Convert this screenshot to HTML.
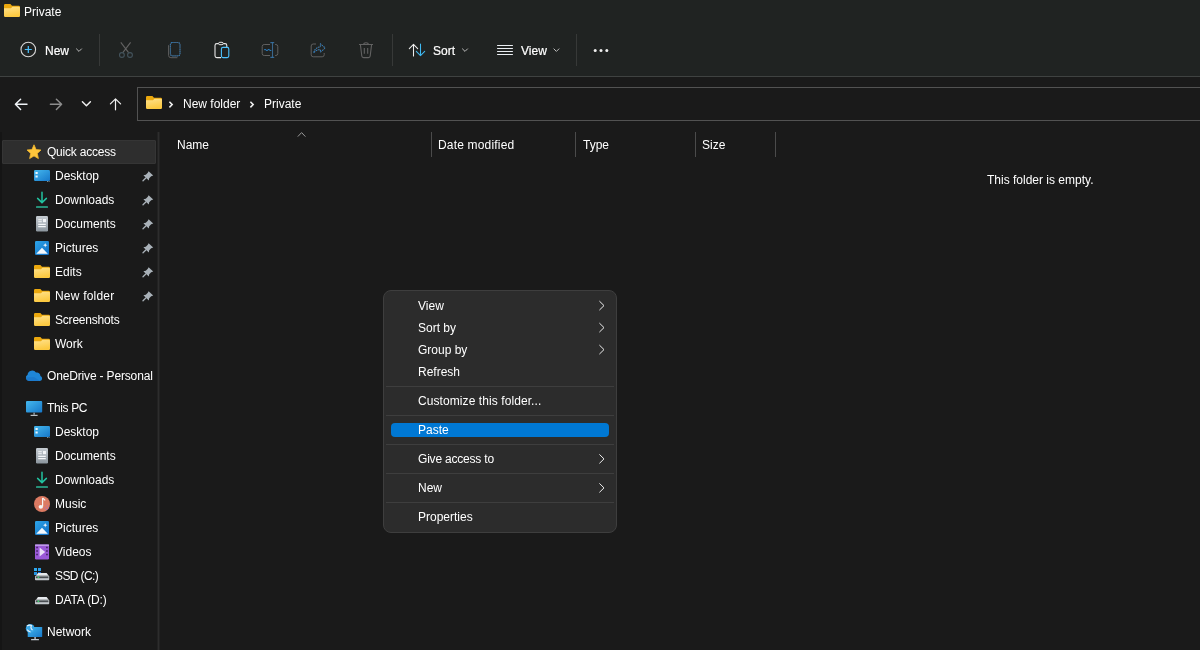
<!DOCTYPE html>
<html><head><meta charset="utf-8">
<style>
html,body{margin:0;padding:0;width:1200px;height:650px;overflow:hidden;background:#1a1a1a;font-family:"Liberation Sans",sans-serif;}
.a{position:absolute;}
.t{position:absolute;font-size:12px;line-height:12px;white-space:nowrap;color:#fff;will-change:transform;}
#top{position:absolute;left:0;top:0;width:1200px;height:76px;background:#202322;}
#topline{position:absolute;left:0;top:76px;width:1200px;height:1px;background:#3f4241;}
.sep{position:absolute;width:1px;background:#373938;}
#addr{position:absolute;left:137px;top:87px;width:1070px;height:32px;border:1px solid #525252;background:#1a1a1a;}
#leftstrip{position:absolute;left:0;top:132px;width:2px;height:518px;background:#151515;}
#divider{position:absolute;left:157px;top:132px;width:3px;height:518px;background:linear-gradient(90deg,#222 0 1px,#2d2d2d 1px 2px,#222 2px 3px);}
#sel{position:absolute;left:2px;top:140px;width:154px;height:24px;box-sizing:border-box;background:#2e2e2e;border:1px solid #353535;border-radius:1px;}
.csep{position:absolute;top:132px;width:1px;height:25px;background:#4b4b4b;}
#menu{position:absolute;left:383px;top:290px;width:232px;height:241px;background:#2c2c2c;border:1px solid #3e3e3e;border-radius:8px;}
.msep{position:absolute;left:386px;width:228px;height:1px;background:#3e3e3e;}
#paste{position:absolute;left:391px;top:423px;width:218px;height:14px;background:#0078d4;border-radius:4px;}
svg{position:absolute;overflow:visible;}
</style></head><body>
<div id="top"></div>
<div id="topline"></div>

<!-- title -->
<div class="t" style="left:24px;top:6px;">Private</div>

<!-- toolbar -->
<div class="t" style="left:45px;top:45px;-webkit-text-stroke:0.2px #fff;">New</div>
<div class="sep" style="left:99px;top:34px;height:32px;"></div>
<div class="sep" style="left:392px;top:34px;height:32px;"></div>
<div class="t" style="left:433px;top:45px;-webkit-text-stroke:0.2px #fff;">Sort</div>
<div class="t" style="left:521px;top:45px;-webkit-text-stroke:0.2px #fff;">View</div>
<div class="sep" style="left:576px;top:34px;height:32px;"></div>

<!-- address -->
<div id="addr"></div>
<div class="t" style="left:183px;top:98px;">New folder</div>
<div class="t" style="left:264px;top:98px;">Private</div>

<!-- sidebar -->
<div id="leftstrip"></div>
<div id="divider"></div>
<div id="sel"></div>
<div class="t" style="left:47px;top:146px;letter-spacing:-0.22px;">Quick access</div>
<div class="t" style="left:55px;top:170px;">Desktop</div>
<div class="t" style="left:55px;top:194px;">Downloads</div>
<div class="t" style="left:55px;top:218px;">Documents</div>
<div class="t" style="left:55px;top:242px;">Pictures</div>
<div class="t" style="left:55px;top:266px;">Edits</div>
<div class="t" style="left:55px;top:290px;letter-spacing:0.2px;">New folder</div>
<div class="t" style="left:55px;top:314px;letter-spacing:-0.2px;">Screenshots</div>
<div class="t" style="left:55px;top:338px;">Work</div>
<div class="t" style="left:47px;top:370px;letter-spacing:-0.16px;">OneDrive - Personal</div>
<div class="t" style="left:47px;top:402px;letter-spacing:-0.37px;">This PC</div>
<div class="t" style="left:55px;top:426px;">Desktop</div>
<div class="t" style="left:55px;top:450px;">Documents</div>
<div class="t" style="left:55px;top:474px;">Downloads</div>
<div class="t" style="left:55px;top:498px;">Music</div>
<div class="t" style="left:55px;top:522px;">Pictures</div>
<div class="t" style="left:55px;top:546px;">Videos</div>
<div class="t" style="left:55px;top:570px;letter-spacing:-0.6px;">SSD (C:)</div>
<div class="t" style="left:55px;top:594px;letter-spacing:-0.15px;">DATA (D:)</div>
<div class="t" style="left:47px;top:626px;">Network</div>

<!-- headers -->
<div class="t" style="left:177px;top:139px;">Name</div>
<div class="csep" style="left:431px;"></div>
<div class="t" style="left:438px;top:139px;letter-spacing:0.18px;">Date modified</div>
<div class="csep" style="left:575px;"></div>
<div class="t" style="left:583px;top:139px;">Type</div>
<div class="csep" style="left:695px;"></div>
<div class="t" style="left:702px;top:139px;">Size</div>
<div class="csep" style="left:775px;"></div>
<div class="t" style="left:987px;top:174px;">This folder is empty.</div>

<!-- menu -->
<div id="menu"></div>
<div class="msep" style="top:386px;"></div>
<div class="msep" style="top:415px;"></div>
<div class="msep" style="top:444px;"></div>
<div class="msep" style="top:473px;"></div>
<div class="msep" style="top:502px;"></div>
<div id="paste"></div>
<div class="t" style="left:418px;top:300px;">View</div>
<div class="t" style="left:418px;top:322px;">Sort by</div>
<div class="t" style="left:418px;top:344px;">Group by</div>
<div class="t" style="left:418px;top:366px;">Refresh</div>
<div class="t" style="left:418px;top:395px;letter-spacing:0.08px;">Customize this folder...</div>
<div class="t" style="left:418px;top:424px;">Paste</div>
<div class="t" style="left:418px;top:453px;letter-spacing:-0.2px;">Give access to</div>
<div class="t" style="left:418px;top:482px;">New</div>
<div class="t" style="left:418px;top:511px;">Properties</div>


<svg class="a" style="left:0;top:0" width="1200" height="650" viewBox="0 0 1200 650">
<defs>
 <linearGradient id="fold" x1="0" y1="0" x2="0.3" y2="1">
  <stop offset="0" stop-color="#ffe28e"/><stop offset="1" stop-color="#fcc940"/>
 </linearGradient>
 <linearGradient id="blueg" x1="0" y1="0" x2="1" y2="1">
  <stop offset="0" stop-color="#5ac8f5"/><stop offset="1" stop-color="#1a7fd6"/>
 </linearGradient>
 <linearGradient id="docg" x1="0" y1="0" x2="0" y2="1">
  <stop offset="0" stop-color="#c6ccd2"/><stop offset="1" stop-color="#8c969e"/>
 </linearGradient>
 <g id="folder">
  <path d="M1.2 0 H6.4 L8 1.8 H14.8 A1.2 1.2 0 0 1 16 3 V6 H0 V1.2 A1.2 1.2 0 0 1 1.2 0 Z" fill="#eba80e"/>
  <path d="M0 4.2 H7 L8.4 2.8 H14.8 A1.2 1.2 0 0 1 16 4 V11.8 A1.2 1.2 0 0 1 14.8 13 H1.2 A1.2 1.2 0 0 1 0 11.8 Z" fill="url(#fold)"/>
 </g>
</defs>
<!-- title folder -->
<use href="#folder" x="4" y="4"/>

<!-- New -->
<circle cx="28.3" cy="49.5" r="7.3" fill="none" stroke="#d6d6d6" stroke-width="1.1"/>
<path d="M28.3 46 V53 M24.8 49.5 H31.8" stroke="#4cc2ff" stroke-width="1.2"/>
<path d="M76.2 48.6 L79 51.4 L81.8 48.6" fill="none" stroke="#bdbdbd" stroke-width="1"/>

<!-- Cut -->
<path d="M120.8 42.3 L128.6 52.6 M130.6 42.3 L122.8 52.6" stroke="#626262" stroke-width="1.1" fill="none"/>
<circle cx="121.9" cy="55" r="2.4" fill="none" stroke="#43535c" stroke-width="1.1"/>
<circle cx="130" cy="55" r="2.4" fill="none" stroke="#43535c" stroke-width="1.1"/>

<!-- Copy -->
<path d="M168.6 45.2 V55.4 A2.3 2.3 0 0 0 170.9 57.7 H177.4" fill="none" stroke="#5e5e5e" stroke-width="1"/>
<rect x="170.4" y="42.5" width="9.6" height="13.4" rx="2" fill="none" stroke="#4a4d4f" stroke-width="1"/>
<rect x="170.4" y="42.5" width="9.6" height="13.4" rx="2" fill="none" stroke="#2a80c8" stroke-width="1.1" stroke-dasharray="1 1.1"/>

<!-- Paste -->
<path d="M218.5 43.6 H216.8 A1.8 1.8 0 0 0 215 45.4 V55.8 A1.8 1.8 0 0 0 216.8 57.6 H221 M223.3 43.6 H225 A1.8 1.8 0 0 1 226.8 45.4 V47" fill="none" stroke="#e8e8e8" stroke-width="1.1"/>
<rect x="218.6" y="42.3" width="4.6" height="2.4" rx="1.2" fill="none" stroke="#e8e8e8" stroke-width="1"/>
<rect x="221.4" y="47.4" width="7.4" height="10.2" rx="1.6" fill="none" stroke="#4cc2ff" stroke-width="1.1"/>

<!-- Rename -->
<path d="M270 44.5 H264.2 A2 2 0 0 0 262.2 46.5 V53.5 A2 2 0 0 0 264.2 55.5 H270 M275 44.5 H275.8 A2 2 0 0 1 277.8 46.5 V53.5 A2 2 0 0 1 275.8 55.5 H275" fill="none" stroke="#606060" stroke-width="1"/>
<path d="M272.5 42.6 V57.4 M270.6 42.6 H274.4 M270.6 57.4 H274.4" stroke="#4a4d4f" stroke-width="1" fill="none"/>
<path d="M272.5 42.6 V57.4 M270.6 42.6 H274.4 M270.6 57.4 H274.4" stroke="#2a80c8" stroke-width="1.1" stroke-dasharray="1 1" fill="none"/>
<path d="M264.2 50 Q265.1 49 266 50 T267.8 50 T269.6 50 T271.2 50" stroke="#2a80c8" stroke-width="1.1" fill="none"/>

<!-- Share -->
<path d="M316 44 H313.2 A2 2 0 0 0 311.2 46 V54.8 A2 2 0 0 0 313.2 56.8 H322.2 A2 2 0 0 0 324.2 54.8 V53" fill="none" stroke="#606060" stroke-width="1"/>
<path d="M313.8 52.6 C314.6 49.2 316.8 47.2 320.4 46.9 V43.8 L325.2 48 L320.4 52.2 V49.6 C317.6 49.6 315.6 50.6 313.8 52.6 Z" fill="none" stroke="#4a4d4f" stroke-width="1" stroke-linejoin="round"/>
<path d="M313.8 52.6 C314.6 49.2 316.8 47.2 320.4 46.9 V43.8 L325.2 48 L320.4 52.2 V49.6 C317.6 49.6 315.6 50.6 313.8 52.6 Z" fill="none" stroke="#2a80c8" stroke-width="1.1" stroke-dasharray="1 1.4" stroke-linejoin="round"/>

<!-- Delete -->
<path d="M359 44.5 H373 M363.7 44.5 A2.3 1.8 0 0 1 368.3 44.5 M360.4 44.5 L361.8 56 A1.8 1.8 0 0 0 363.6 57.6 H368.4 A1.8 1.8 0 0 0 370.2 56 L371.6 44.5 M364.3 48 V53.8 M367.7 48 V53.8" fill="none" stroke="#626262" stroke-width="1.1"/>

<!-- Sort -->
<path d="M413.5 56 V44.4 M409.3 48.6 L413.5 44.4 L417.7 48.6" fill="none" stroke="#eeeeee" stroke-width="1.05" stroke-linecap="round" stroke-linejoin="round"/>
<path d="M420.5 44 V55.6 M416.3 51.4 L420.5 55.6 L424.7 51.4" fill="none" stroke="#3fb9f2" stroke-width="1.05" stroke-linecap="round" stroke-linejoin="round"/>
<path d="M462.2 48.6 L465 51.4 L467.8 48.6" fill="none" stroke="#bdbdbd" stroke-width="1"/>

<!-- View -->
<path d="M497.5 45.5 H512.5 M497.5 48.5 H512.5 M497.5 51.5 H512.5 M497.5 54.5 H512.5" stroke="#eaeef2" stroke-width="1" stroke-linecap="round"/>
<path d="M553.6 48.6 L556.4 51.4 L559.2 48.6" fill="none" stroke="#bdbdbd" stroke-width="1"/>

<!-- more -->
<circle cx="595.2" cy="50.6" r="1.5" fill="#f0f0f0"/>
<circle cx="601" cy="50.6" r="1.5" fill="#f0f0f0"/>
<circle cx="606.8" cy="50.6" r="1.5" fill="#f0f0f0"/>

<!-- nav -->
<path d="M27 104.3 H15.6 M20.6 99.2 L15.4 104.3 L20.6 109.4" fill="none" stroke="#f0f4f8" stroke-width="1.45" stroke-linecap="round" stroke-linejoin="round"/>
<path d="M50.4 104.3 H61.6 M56.4 99.2 L61.6 104.3 L56.4 109.4" fill="none" stroke="#8e8e8e" stroke-width="1.45" stroke-linecap="round" stroke-linejoin="round"/>
<path d="M82.4 101.8 L86.4 105.8 L90.4 101.8" fill="none" stroke="#f0f0f0" stroke-width="1.45" stroke-linecap="round" stroke-linejoin="round"/>
<path d="M115.5 109.8 V98.8 M110.4 103.9 L115.5 98.8 L120.6 103.9" fill="none" stroke="#f0f0f0" stroke-width="1.2" stroke-linecap="round" stroke-linejoin="round"/>

<!-- address -->
<use href="#folder" x="146" y="96"/>
<path d="M169.4 101.8 L172.2 104.6 L169.4 107.4" fill="none" stroke="#f0f0f0" stroke-width="1.5"/>
<path d="M250.4 101.8 L253.2 104.6 L250.4 107.4" fill="none" stroke="#f0f0f0" stroke-width="1.5"/>

<!-- sort caret -->
<path d="M297.8 136.6 L301.6 132.6 L305.4 136.6" fill="none" stroke="#9a9a9a" stroke-width="1"/>

<!-- menu chevrons -->
<path d="M599.4 301.1 L604 305.6 L599.4 310.1" fill="none" stroke="#ececec" stroke-width="1"/>
<path d="M599.4 323.1 L604 327.6 L599.4 332.1" fill="none" stroke="#ececec" stroke-width="1"/>
<path d="M599.4 345.1 L604 349.6 L599.4 354.1" fill="none" stroke="#ececec" stroke-width="1"/>
<path d="M599.4 454.4 L604 458.9 L599.4 463.4" fill="none" stroke="#ececec" stroke-width="1"/>
<path d="M599.4 483.4 L604 487.9 L599.4 492.4" fill="none" stroke="#ececec" stroke-width="1"/>
</svg>

<svg class="a" style="left:0;top:0" width="1200" height="650" viewBox="0 0 1200 650">
<defs>
 <linearGradient id="desk" x1="0" y1="0" x2="1" y2="1">
  <stop offset="0" stop-color="#45b8ee"/><stop offset="1" stop-color="#1677c9"/>
 </linearGradient>
 <linearGradient id="pic" x1="0" y1="0" x2="1" y2="1">
  <stop offset="0" stop-color="#2ea6ea"/><stop offset="1" stop-color="#0f6cc4"/>
 </linearGradient>
 <linearGradient id="dl" x1="0" y1="0" x2="0" y2="1">
  <stop offset="0" stop-color="#20c9a0"/><stop offset="1" stop-color="#2bb38f"/>
 </linearGradient>
 <g id="i-desk">
  <rect x="0" y="0" width="16" height="11" rx="1.2" fill="url(#desk)"/>
  <rect x="1.5" y="2" width="2.2" height="2" fill="#e8f6ff"/>
  <rect x="1.5" y="5.5" width="2.2" height="2" fill="#e8f6ff"/>
  <rect x="13" y="11.2" width="1" height="0.8" fill="#9aa"/><rect x="14.6" y="11.2" width="1" height="0.8" fill="#9aa"/>
 </g>
 <g id="i-dl">
  <path d="M6 0.2 V10.6 M1.6 6.4 L6 10.6 L10.4 6.4" fill="none" stroke="#22c3a0" stroke-width="1.5" stroke-linecap="round"/>
  <rect x="0" y="14.2" width="12" height="1.6" rx="0.6" fill="#2bb898"/>
 </g>
 <g id="i-doc">
  <rect x="0" y="0" width="12" height="15.5" rx="1.2" fill="url(#docg)"/>
  <path d="M2.2 3.8 H5.8 M2.2 5.8 H5.8 M2.2 8.4 H9.8 M2.2 10.6 H9.8" stroke="#f4f6f8" stroke-width="1.1"/>
  <rect x="7" y="3" width="3" height="3.2" fill="#f4f6f8"/>
 </g>
 <g id="i-pic">
  <rect x="0" y="0" width="14" height="14" rx="1.2" fill="url(#pic)"/>
  <path d="M1.2 12.8 L7 6.8 L12.8 12.8 Z" fill="#f4f8fc"/>
  <path d="M10.2 2 L10.8 3.6 L12.4 4.2 L10.8 4.8 L10.2 6.4 L9.6 4.8 L8 4.2 L9.6 3.6 Z" fill="#f4f8fc"/>
 </g>
</defs>
<!-- quick access star -->
<path d="M34 144.8 L36.1 149.6 L41 150 L37.3 153.4 L38.4 158.6 L34 155.9 L29.6 158.6 L30.7 153.4 L27 150 L31.9 149.6 Z" fill="#fdc53c" stroke="#f4b72c" stroke-width="0.8" stroke-linejoin="round"/>

<use href="#i-desk" x="34" y="170"/>
<use href="#i-dl" x="36" y="192"/>
<use href="#i-doc" x="36" y="216"/>
<use href="#i-pic" x="35" y="241"/>
<use href="#folder" x="34" y="265"/>
<use href="#folder" x="34" y="289"/>
<use href="#folder" x="34" y="313"/>
<use href="#folder" x="34" y="337"/>

<!-- pins -->
<defs><g id="pin"><path d="M9.6 3.2 L14.2 7.6 L12.2 8.2 L10.2 10.2 L9.8 12.6 L4.4 7.2 L6.8 6.8 L8.8 4.8 Z" fill="#a9b1b8"/><path d="M6.8 10 L4 12.8" stroke="#a9b1b8" stroke-width="1.3" stroke-linecap="round"/></g></defs>
<use href="#pin" x="139" y="168"/>
<use href="#pin" x="139" y="192"/>
<use href="#pin" x="139" y="216"/>
<use href="#pin" x="139" y="240"/>
<use href="#pin" x="139" y="264"/>
<use href="#pin" x="139" y="288"/>

<!-- OneDrive -->
<path d="M29 381 A3.3 3.3 0 0 1 27.6 374.8 A4.6 4.6 0 0 1 36 372.6 A3.4 3.4 0 0 1 40.4 376 A2.6 2.6 0 0 1 40 381 Z" fill="#1f86d6"/>
<path d="M29 381 A3.3 3.3 0 0 1 26 377.6 L34 377 L40 381 Z" fill="#1a73c4" opacity="0.6"/>

<!-- This PC -->
<rect x="26" y="401" width="16.2" height="11.6" rx="1" fill="url(#desk)"/>
<rect x="33.4" y="412.6" width="1.4" height="2.2" fill="#9aa4ac"/>
<rect x="30.6" y="414.8" width="7" height="1.2" fill="#b8c0c6"/>

<use href="#i-desk" x="34" y="426"/>
<use href="#i-doc" x="36" y="448"/>
<use href="#i-dl" x="36" y="472"/>
<!-- music -->
<circle cx="42" cy="504" r="8" fill="#dc7a62"/>
<path d="M42.6 498 V506.5" stroke="#f4f4f4" stroke-width="1.2"/>
<path d="M42.6 498 L45.2 500.4" stroke="#f4f4f4" stroke-width="1.2"/>
<ellipse cx="40.8" cy="506.8" rx="2.2" ry="1.9" fill="#f4f4f4"/>
<path d="M44.5 508 h1 M46.5 506 h1 M46 509.5 h1 M48 508 h1" stroke="#9c6ee0" stroke-width="1"/>
<use href="#i-pic" x="35" y="521"/>
<!-- videos -->
<rect x="35" y="544.5" width="14" height="15" rx="1.2" fill="#9a58d8"/>
<rect x="35" y="544.5" width="14" height="1.4" fill="#c3a4ec"/>
<path d="M36.3 547.5 h1.5 M36.3 551 h1.5 M36.3 554.5 h1.5 M46.2 547.5 h1.5 M46.2 551 h1.5 M46.2 554.5 h1.5" stroke="#3a2058" stroke-width="1.4"/>
<path d="M39.6 547.6 L45.2 552 L39.6 556.4 Z" fill="#e8ddf6"/>
<!-- SSD -->
<defs><g id="drive">
 <path d="M1 2.8 L3 0 H11.6 L13.8 2.8 Z" fill="#e6e9ec"/>
 <rect x="0" y="2.8" width="14.2" height="4.4" rx="0.8" fill="#c4c9cd"/>
 <rect x="0.8" y="3.4" width="12.6" height="1.8" fill="#4a4e52"/>
 <rect x="2.6" y="3.5" width="1.6" height="1.6" fill="#3cd070"/>
</g></defs>
<rect x="34" y="568" width="3" height="3" fill="#2eaaf0"/><rect x="38" y="568" width="3" height="3" fill="#2a9fea"/>
<rect x="34" y="572" width="3" height="3" fill="#2494e4"/><rect x="38" y="572" width="3" height="3" fill="#1a72d8"/>
<use href="#drive" x="35" y="573"/>
<!-- DATA -->
<use href="#drive" x="35" y="597"/>
<!-- Network -->
<rect x="27.7" y="627" width="14.5" height="10" rx="0.6" fill="url(#desk)"/>
<rect x="34.3" y="637" width="1.6" height="2" fill="#aab2b8"/>
<rect x="31" y="639" width="8" height="1.2" rx="0.5" fill="#c0c8ce"/>
<circle cx="30.2" cy="628.4" r="4.4" fill="#3aa6e6"/>
<path d="M27 626 Q29 624.6 31.4 625.4 Q30 628 32.5 630 M27.2 629.6 Q28.6 631.5 30.6 632" fill="none" stroke="#e8f2f8" stroke-width="1.1"/>
</svg>
</body></html>
